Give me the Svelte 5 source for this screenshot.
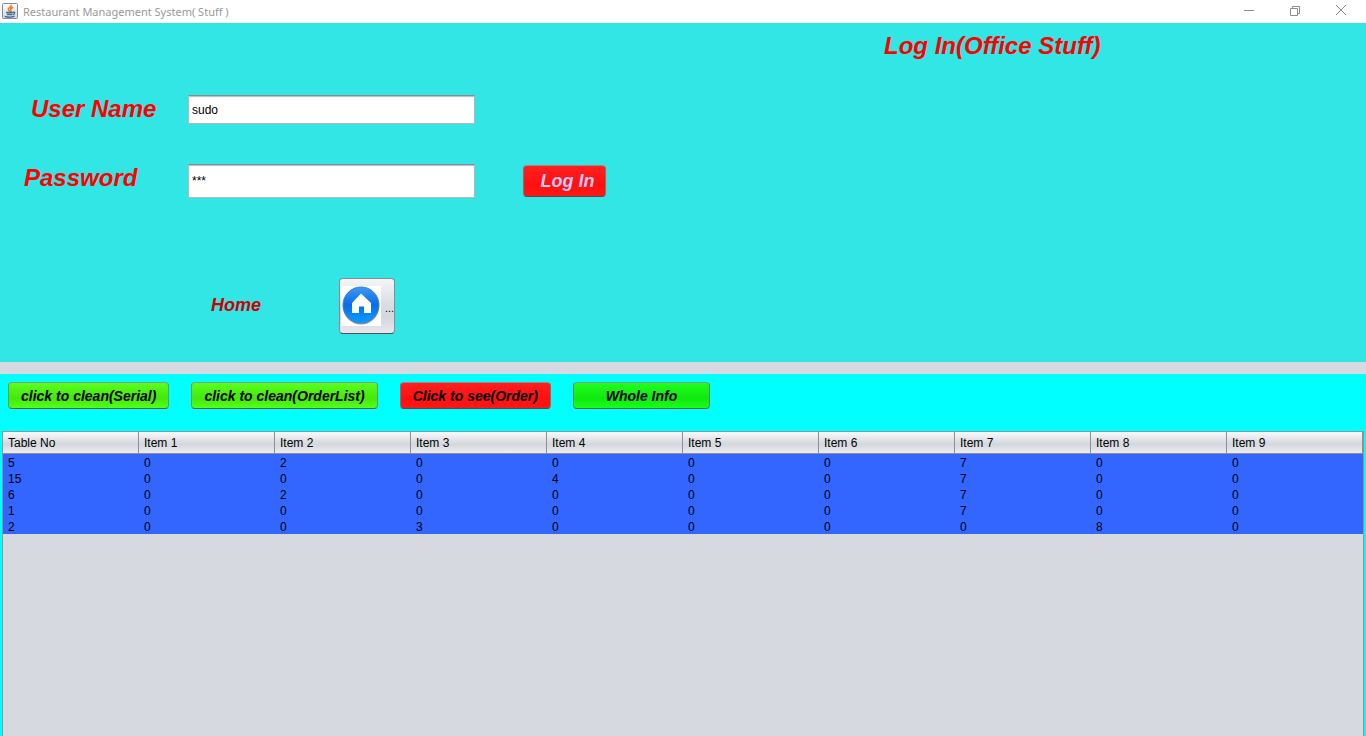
<script>
  let user = $state('sudo');
  let pass = $state('***');
  const columns = ['Table No', ...Array.from({ length: 9 }, (_, i) => `Item ${i + 1}`)];
  const rows = [
    [5, 0, 2, 0, 0, 0, 0, 7, 0, 0],
    [15, 0, 0, 0, 4, 0, 0, 7, 0, 0],
    [6, 0, 2, 0, 0, 0, 0, 7, 0, 0],
    [1, 0, 0, 0, 0, 0, 0, 7, 0, 0],
    [2, 0, 0, 3, 0, 0, 0, 0, 8, 0]
  ];
</script>

<div class="window">
  <header class="titlebar">
    <svg class="java" width="16" height="16" viewBox="0 0 16 16" aria-hidden="true">
      <defs>
        <linearGradient id="javaBg" x1="0" y1="0" x2="0" y2="1">
          <stop offset="0" stop-color="#fdfdfd" /><stop offset="1" stop-color="#cfd9e2" />
        </linearGradient>
      </defs>
      <rect x="0.5" y="0.5" width="15" height="15" rx="1" fill="url(#javaBg)" stroke="#7f8a93" />
      <path d="M9.300 1.800C9.800 4 5.800 4.600 6.400 6.600C6.700 7.500 7.500 7.800 7.500 8.600M11.200 4.200C8.800 5.200 8 6 9 7.300C9.300 7.800 9 8.300 8.500 8.800" fill="none" stroke="#ee7a1c" stroke-width="1.600" />
      <path d="M4 9.500H10.500M5 11.500H10M10.500 9.300C13.700 8.300 13.200 11 10.500 11.600M2.800 13.300C6 14.300 10 14.300 12.700 13" fill="none" stroke="#3f6890" stroke-width="1.300" />
    </svg>
    <span class="caption">Restaurant Management System( Stuff )</span>
    <div class="controls">
      <button aria-label="Minimize"><svg width="12" height="12" viewBox="0 0 12 12"><path d="M1 5.500H11" /></svg></button>
      <button aria-label="Restore"><svg width="12" height="12" viewBox="0 0 12 12"><path d="M1.500 3.500H8.500V10.500H1.500ZM3.500 3.500V1.500H10.500V8.500H8.500" /></svg></button>
      <button aria-label="Close"><svg width="12" height="12" viewBox="0 0 12 12"><path d="M1 0L11 10M11 0L1 10" /></svg></button>
    </div>
  </header>

  <form class="login" onsubmit={(e) => e.preventDefault()}>
    <h1>Log In(Office Stuff)</h1>
    <div class="field">
      <label class="name" for="user">User Name</label>
      <input id="user" type="text" bind:value={user} />
    </div>
    <div class="field secret">
      <label class="pass" for="pass">Password</label>
      <input id="pass" type="text" bind:value={pass} />
      <button class="btn submit">Log In</button>
    </div>
    <div class="home-row">
      <label for="home">Home</label>
      <button class="home" id="home" type="button">
        <svg width="40" height="40" viewBox="0 0 40 40" aria-hidden="true">
          <defs>
            <linearGradient id="disc" x1="0" y1="0" x2="0" y2="1">
              <stop offset="0" stop-color="#3a9bf0" /><stop offset="0.500" stop-color="#0b6be8" /><stop offset="1" stop-color="#08a0ff" />
            </linearGradient>
          </defs>
          <rect width="40" height="40" fill="#fff" />
          <circle cx="20" cy="20.500" r="18" fill="#8f9aa5" />
          <circle cx="20" cy="19" r="18" fill="url(#disc)" stroke="#3f7fd0" />
          <path d="M20 7.500L30 17V27H23V20.500H18V27H11V17Z" fill="#fff" />
        </svg>
        <span>...</span>
      </button>
    </div>
  </form>

  <section class="orders">
    <div class="actions">
      <button class="btn lime">click to clean(Serial)</button>
      <button class="btn lime">click to clean(OrderList)</button>
      <button class="btn">Click to see(Order)</button>
      <button class="btn green">Whole Info</button>
    </div>
    <div class="pane">
      <table>
        <thead>
          <tr>{#each columns as c}<th scope="col">{c}</th>{/each}</tr>
        </thead>
        <tbody>
          {#each rows as row}
            <tr>{#each row as cell}<td>{cell}</td>{/each}</tr>
          {/each}
        </tbody>
      </table>
    </div>
  </section>
</div>

<style>
  :global(body) { margin: 0; }
  * { box-sizing: border-box; }
  .window {
    display: flex;
    flex-direction: column;
    min-height: 100vh;
    background: #d6d9df;
    font-family: "Liberation Sans", Arial, sans-serif;
    font-size: 12px;
    color: #000;
  }
  button, input { font: inherit; color: inherit; margin: 0; }
  .titlebar {
    display: flex;
    align-items: center;
    gap: 5px;
    height: 23px;
    padding: 0 2px 1px;
    background: #fff;
    color: #999;
    font-family: "Noto Sans", "Open Sans", sans-serif;
    font-size: 11px;
  }
  .caption { flex: 1; white-space: nowrap; }
  .controls { display: flex; }
  .controls button {
    display: flex;
    align-items: center;
    justify-content: center;
    width: 46px;
    height: 20px;
    padding: 0;
    border: 0;
    background: none;
  }
  .controls path { fill: none; stroke: #8c8c8c; }
  .login {
    padding: 9px 0 28px;
    background: #33e6e6;
    color: #f00;
    font-weight: bold;
    font-style: italic;
  }
  h1 {
    margin: 0 0 35px;
    padding-left: 884px;
    font-size: 24px;
    line-height: 28px;
    white-space: nowrap;
  }
  .field { display: flex; align-items: flex-start; }
  .field label {
    width: 188px;
    font-size: 24px;
    line-height: 28px;
  }
  .name { padding-left: 31px; }
  .pass { padding-left: 24px; }
  input {
    width: 287px;
    height: 29px;
    padding: 0 3px;
    border: 1px solid #b4b8bc;
    border-top-color: #888c90;
    border-radius: 0;
    background: #fff;
    box-shadow: inset 0 1px 1px #bbb;
    color: #000;
    font-weight: normal;
    font-style: normal;
    outline: 0;
  }
  .secret { margin: 40px 0 80px; }
  .secret input { height: 34px; margin-right: 48px; }
  .btn {
    height: 27px;
    padding: 0 12px;
    border: 1px solid;
    border-color: #b08080 #a06464 #505050;
    border-radius: 4px;
    background: linear-gradient(#ff2020, #ff1010 60%, #ff1616);
    font-size: 14px;
    font-weight: bold;
    font-style: italic;
    white-space: nowrap;
  }
  .submit {
    width: 83px;
    height: 32px;
    margin-top: 1px;
    padding: 0 0 0 6px;
    color: #dcc8f5;
    font-size: 18px;
  }
  .lime {
    border-color: #80a080 #60a050 #406040;
    background: linear-gradient(#5aff20, #44e80c 60%, #54ff18);
  }
  .green {
    min-width: 137px;
    border-color: #80a080 #509050 #406040;
    background: linear-gradient(#20ff20, #10e810 60%, #18ff18);
  }
  .home-row {
    display: flex;
    align-items: center;
    padding-left: 211px;
    color: #c00;
    font-size: 18px;
  }
  .home-row label { width: 128px; padding-bottom: 2px; }
  .home {
    display: flex;
    align-items: center;
    gap: 4px;
    width: 56px;
    height: 56px;
    padding: 0 0 0 1px;
    border: 1px solid #888c92;
    border-bottom-color: #4e5258;
    border-radius: 4px;
    background: linear-gradient(#f4f5f8, #dadce2 50%, #d4d7dd 70%, #e6e8ee);
    color: #000;
    font-size: 11px;
    font-weight: normal;
    font-style: normal;
  }
  .home svg { flex: none; }
  .home span { padding-top: 3px; }
  .orders {
    display: flex;
    flex: 1;
    flex-direction: column;
    margin-top: 12px;
    padding: 8px 2px 0;
    background: #0ff;
  }
  .actions {
    display: flex;
    gap: 22px;
    padding: 0 6px 22px;
  }
  .pane {
    flex: 1;
    border: 1px solid #92959b;
    border-bottom: 0;
    background: #d6d9df;
  }
  table {
    width: 100%;
    table-layout: fixed;
    border-collapse: separate;
    border-spacing: 0;
  }
  th, td {
    padding: 0 5px;
    text-align: left;
    font-weight: normal;
  }
  th {
    height: 22px;
    border-right: 1px solid #8c8f95;
    border-bottom: 1px solid #8c8f95;
    background: linear-gradient(#fafafc, #dcdee3 45%, #d4d7dc 60%, #eceef4);
  }
  td {
    height: 16px;
    padding-top: 2px;
    background: #3366ff;
    line-height: 14px;
  }
</style>
